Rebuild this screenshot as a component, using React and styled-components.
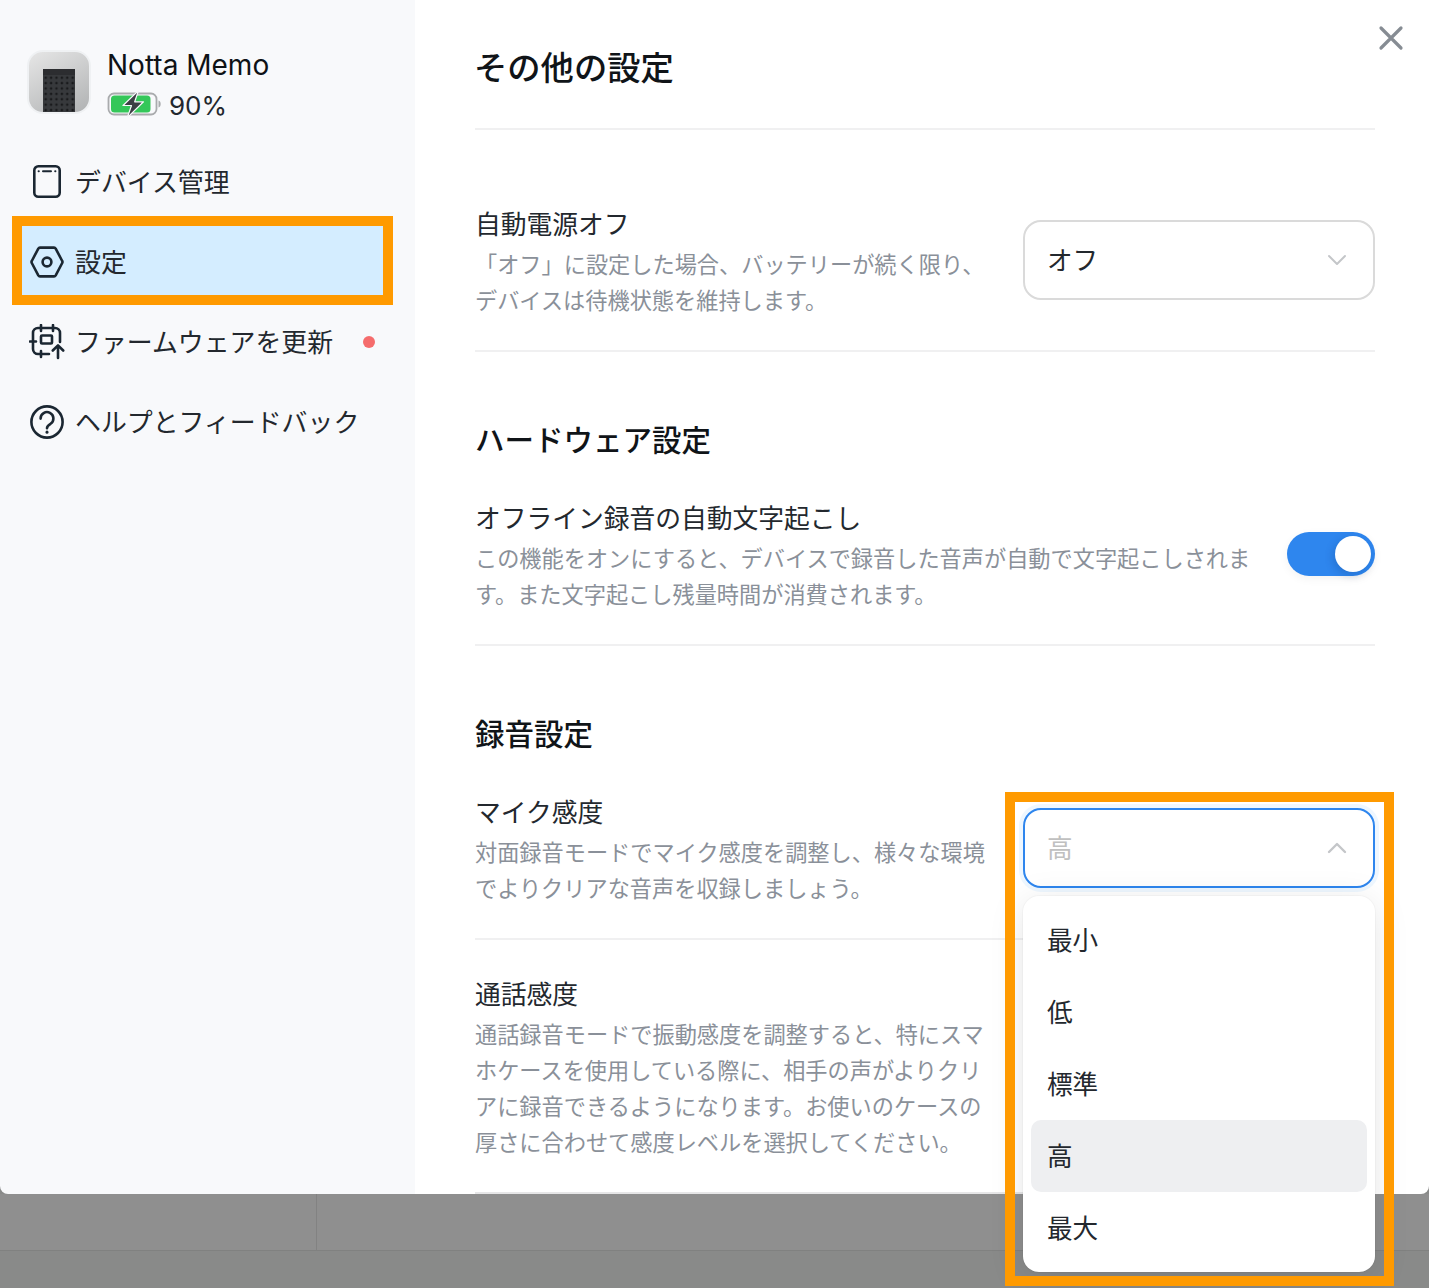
import React from "react";
import styled, { createGlobalStyle } from "styled-components";

const GlobalStyle = createGlobalStyle`
  html, body {
    margin: 0;
    padding: 0;
    background: #898a89;
  }
  * {
    box-sizing: border-box;
  }
`;

const Page = styled.div`
  position: relative;
  width: 1429px;
  height: 1288px;
  overflow: hidden;
  background: #898a89;
  font-family: Inter, "Noto Sans CJK JP", "Noto Sans", sans-serif;
  color: #23282e;
`;

const Modal = styled.div`
  position: relative;
  display: flex;
  height: 1194px;
`;

const Sidebar = styled.aside`
  flex: none;
  width: 415px;
  padding: 50px 0 0 16px;
  background: #f8f9fb;
  border-bottom-left-radius: 8px;
`;

const Brand = styled.div`
  display: flex;
  gap: 17px;
  height: 64px;
  padding-left: 11px;
  margin-bottom: 32px;
`;

const DeviceThumb = styled.div`
  flex: none;
  display: flex;
  flex-direction: column;
  align-items: center;
  justify-content: flex-end;
  width: 64px;
  height: 64px;
  overflow: hidden;
  border: 2px solid #eff1f3;
  border-radius: 16px;
  background: linear-gradient(150deg, #e6e6e6, #b0b2b3);
`;

const DeviceTop = styled.div`
  flex: none;
  width: 32px;
  height: 6px;
  background: #2c2d30;
`;

const DeviceBody = styled.div`
  flex: none;
  width: 32px;
  height: 37px;
  background-color: #37393c;
  background-image: radial-gradient(#191a1c 1.2px, transparent 1.5px);
  background-size: 5.4px 5.4px;
  background-position: 0 0;
`;

const BrandText = styled.div`
  display: flex;
  flex-direction: column;
  margin-left: -1px;
`;

const BrandName = styled.div`
  height: 30px;
  font-size: 28px;
  line-height: 30px;
  font-weight: 400;
  color: #0e1216;
`;

const BatteryRow = styled.div`
  display: flex;
  align-items: center;
  gap: 7px;
  margin-top: 10px;
  height: 28px;
  font-size: 26px;
`;

const BatteryLevel = styled.span`
  padding-top: 2px;
`;

const Nav = styled.nav`
  display: flex;
  flex-direction: column;
  gap: 8px;
`;

const NavItem = styled.div`
  display: flex;
  align-items: center;
  gap: 10px;
  width: 367px;
  height: 72px;
  padding: 0 8px 0 13px;
  font-size: 25.9px;
  line-height: 36px;
  background: ${(p) => (p.$active ? "#d4edff" : "transparent")};
  svg {
    flex: none;
  }
`;

const NavLabel = styled.span`
  padding-top: 2px;
`;

const Dot = styled.span`
  width: 12px;
  height: 12px;
  margin-left: auto;
  border-radius: 50%;
  background: #f56c6c;
`;

const Content = styled.main`
  position: relative;
  flex: 1;
  padding: 0 54px 0 60px;
  background: #fff;
  border-bottom-right-radius: 8px;
`;

const CloseButton = styled.button`
  position: absolute;
  top: 24px;
  right: 24px;
  display: flex;
  width: 28px;
  height: 28px;
  padding: 0;
  border: 0;
  background: none;
`;

const Header = styled.header`
  padding: 42px 0 34px;
  border-bottom: 2px solid #f0f0f1;
`;

const Title = styled.h1`
  margin: 0;
  margin-left: -1px;
  font-size: 33.3px;
  line-height: 52px;
  font-weight: 500;
  color: #101418;
`;

const SectionTitle = styled.h2`
  margin: 65px 0 37px;
  font-size: 29.5px;
  line-height: 46px;
  font-weight: 500;
  color: #101418;
`;

const Row = styled.section`
  display: flex;
  align-items: flex-start;
  justify-content: space-between;
  gap: 24px;
  padding: ${(p) => p.$top || 0}px 0 31px;
  border-bottom: 2px solid ${(p) => (p.$last ? "#e6e6e7" : "#f0f0f1")};
`;

const RowText = styled.div`
  flex: 1;
  min-width: 0;
  padding-top: 1px;
`;

const RowLabel = styled.div`
  margin-bottom: 4px;
  font-size: 25.75px;
  line-height: 36px;
`;

const RowDesc = styled.div`
  font-size: 22.2px;
  line-height: 36px;
  color: #8a9099;
`;

const SelectWrap = styled.div`
  position: relative;
  flex: none;
  width: 352px;
  margin-top: 14px;
`;

const SelectBox = styled.div`
  display: flex;
  align-items: center;
  justify-content: space-between;
  height: 80px;
  padding: 0 26px 0 22px;
  border: 2px solid ${(p) => (p.$open ? "#2e86ee" : "#dadada")};
  border-radius: 18px;
  background: #fff;
  font-size: 25.6px;
  line-height: 34px;
  color: ${(p) => (p.$open ? "#c0c0c0" : "#23282e")};
  box-shadow: ${(p) => (p.$open ? "0 0 0 4px #eef7ff" : "none")};
`;

const SelectValue = styled.span`
  padding-top: 2px;
`;

const Menu = styled.ul`
  position: absolute;
  top: 88px;
  left: 0;
  z-index: 3;
  width: 352px;
  margin: 0;
  padding: 8px;
  list-style: none;
  background: #fff;
  border-radius: 16px;
  box-shadow: 0 0 0 1px rgba(0, 0, 0, 0.025), 0 6px 36px rgba(0, 0, 0, 0.1);
`;

const MenuItem = styled.li`
  display: flex;
  align-items: center;
  height: 72px;
  padding: 2px 0 0 16px;
  border-radius: 10px;
  font-size: 25.6px;
  line-height: 34px;
  background: ${(p) => (p.$selected ? "#eeeff1" : "transparent")};
`;

const SelectSlot = styled.div`
  flex: none;
  width: 352px;
`;

const Toggle = styled.div`
  position: relative;
  flex: none;
  width: 88px;
  height: 44px;
  margin-top: 32px;
  border-radius: 22px;
  background: #2e86ee;
  box-shadow: 0 3px 10px rgba(0, 0, 0, 0.05);
`;

const Knob = styled.span`
  position: absolute;
  top: 4px;
  right: 4px;
  width: 36px;
  height: 36px;
  border-radius: 50%;
  background: #fff;
  box-shadow: -2px 3px 8px rgba(10, 50, 110, 0.22);
`;

const BackdropStrip = styled.div`
  display: flex;
  height: 57px;
  background: #8f8f8f;
  border-bottom: 1px solid #808180;
`;

const BackdropCell = styled.div`
  width: 317px;
  border-right: 1px solid #828282;
`;

const Annotation = styled.div`
  position: absolute;
  z-index: 5;
  border: 10px solid #ff9a00;
  pointer-events: none;
`;

const NavAnnotation = styled(Annotation)`
  left: 12px;
  top: 216px;
  width: 381px;
  height: 89px;
`;

const SelectAnnotation = styled(Annotation)`
  left: 1005px;
  top: 792px;
  width: 389px;
  height: 494px;
`;

const stroke = {
  fill: "none",
  stroke: "#1b2732",
  strokeWidth: 2.6,
  strokeLinecap: "round",
  strokeLinejoin: "round",
};

const DeviceIcon = () => (
  <svg width="36" height="36" viewBox="0 0 36 36" {...stroke}>
    <rect x="5.3" y="2.3" width="25.4" height="30.4" rx="4" />
    <path d="M14 7.2h8M9.6 7.2h.2M26.2 7.2h.2" strokeWidth="2" />
  </svg>
);

const GearIcon = () => (
  <svg width="36" height="36" viewBox="0 0 36 36" {...stroke}>
    <path d="M11 3.6h14a2 2 0 0 1 1.7 1L33.2 17a2 2 0 0 1 0 2l-6.5 12.4a2 2 0 0 1-1.7 1H11a2 2 0 0 1-1.7-1L2.8 19a2 2 0 0 1 0-2L9.3 4.6a2 2 0 0 1 1.7-1z" />
    <circle cx="18" cy="18" r="4.4" />
  </svg>
);

const FirmwareIcon = () => (
  <svg width="36" height="36" viewBox="0 0 36 36" {...stroke}>
    <path d="M20 30H9a5 5 0 0 1-5-5V9a5 5 0 0 1 5-5h17a5 5 0 0 1 5 5v9" />
    <rect x="12" y="11.5" width="11" height="8" rx="1" />
    <path d="M12 1v6M24 1v6M1 17.5h6M12 27v6M29 34V21.5M23.8 26.5l5.2-5.2 5.2 5.2" />
  </svg>
);

const HelpIcon = () => (
  <svg width="36" height="36" viewBox="0 0 36 36" {...stroke}>
    <circle cx="18" cy="18" r="15.6" />
    <path d="M11.6 14.6a6.4 6.4 0 1 1 10 5.2c-2.3 1.5-3.6 2.2-3.6 4.4" />
    <path d="M18 28v.2" strokeWidth="3" />
  </svg>
);

const ChevronIcon = ({ up, color, width = 2 }) => (
  <svg width="20" height="12" viewBox="0 0 20 12" fill="none" stroke={color} strokeWidth={width} strokeLinecap="round" strokeLinejoin="round">
    <path d={up ? "M2 10l8-8 8 8" : "M2 2l8 8 8-8"} />
  </svg>
);

const BatteryIcon = () => (
  <svg width="55" height="28" viewBox="0 0 54 28">
    <rect x="1" y="3.5" width="48" height="21" rx="5.5" fill="#f8f9fb" stroke="#a9abad" strokeWidth="1.8" />
    <rect x="3.5" y="5.6" width="39.5" height="17" rx="3.5" fill="#34c759" />
    <path d="M51 10.5c1.5.5 2.2 1.8 2.2 3.5s-.7 3-2.2 3.5z" fill="#a9abad" />
    <path d="M31 .6 15.5 15.5h8.5L19.8 27.6 36 11.8h-8.8z" fill="#3c3f44" stroke="#f8f9fb" strokeWidth="1.2" strokeLinejoin="round" />
  </svg>
);

const CloseIcon = () => (
  <svg width="28" height="28" viewBox="0 0 28 28" fill="none" stroke="#868c93" strokeWidth="3.2" strokeLinecap="round">
    <path d="M4 4l20 20M24 4L4 24" />
  </svg>
);

const sensitivityOptions = ["最小", "低", "標準", "高", "最大"];

export default function App() {
  return (
    <Page>
      <GlobalStyle />
      <Modal>
        <Sidebar>
          <Brand>
            <DeviceThumb>
              <DeviceTop />
              <DeviceBody />
            </DeviceThumb>
            <BrandText>
              <BrandName>Notta Memo</BrandName>
              <BatteryRow>
                <BatteryIcon />
                <BatteryLevel>90%</BatteryLevel>
              </BatteryRow>
            </BrandText>
          </Brand>
          <Nav>
            <NavItem>
              <DeviceIcon />
              <NavLabel>デバイス管理</NavLabel>
            </NavItem>
            <NavItem $active>
              <GearIcon />
              <NavLabel>設定</NavLabel>
            </NavItem>
            <NavItem>
              <FirmwareIcon />
              <NavLabel>ファームウェアを更新</NavLabel>
              <Dot />
            </NavItem>
            <NavItem>
              <HelpIcon />
              <NavLabel>ヘルプとフィードバック</NavLabel>
            </NavItem>
          </Nav>
        </Sidebar>

        <Content>
          <CloseButton aria-label="閉じる">
            <CloseIcon />
          </CloseButton>
          <Header>
            <Title>その他の設定</Title>
          </Header>

          <Row $top={76}>
            <RowText>
              <RowLabel>自動電源オフ</RowLabel>
              <RowDesc>「オフ」に設定した場合、バッテリーが続く限り、デバイスは待機状態を維持します。</RowDesc>
            </RowText>
            <SelectWrap>
              <SelectBox>
                <SelectValue>オフ</SelectValue>
                <ChevronIcon color="#c4c6c9" />
              </SelectBox>
            </SelectWrap>
          </Row>

          <SectionTitle>ハードウェア設定</SectionTitle>
          <Row>
            <RowText>
              <RowLabel>オフライン録音の自動文字起こし</RowLabel>
              <RowDesc>この機能をオンにすると、デバイスで録音した音声が自動で文字起こしされます。また文字起こし残量時間が消費されます。</RowDesc>
            </RowText>
            <Toggle>
              <Knob />
            </Toggle>
          </Row>

          <SectionTitle>録音設定</SectionTitle>
          <Row>
            <RowText>
              <RowLabel>マイク感度</RowLabel>
              <RowDesc>対面録音モードでマイク感度を調整し、様々な環境でよりクリアな音声を収録しましょう。</RowDesc>
            </RowText>
            <SelectWrap>
              <SelectBox $open>
                <SelectValue>高</SelectValue>
                <ChevronIcon up color="#c4c6c9" width={2.4} />
              </SelectBox>
              <Menu>
                {sensitivityOptions.map((option) => (
                  <MenuItem key={option} $selected={option === "高"}>
                    {option}
                  </MenuItem>
                ))}
              </Menu>
            </SelectWrap>
          </Row>

          <Row $top={36} $last>
            <RowText>
              <RowLabel>通話感度</RowLabel>
              <RowDesc>通話録音モードで振動感度を調整すると、特にスマホケースを使用している際に、相手の声がよりクリアに録音できるようになります。お使いのケースの厚さに合わせて感度レベルを選択してください。</RowDesc>
            </RowText>
            <SelectSlot />
          </Row>
        </Content>
      </Modal>

      <BackdropStrip>
        <BackdropCell />
      </BackdropStrip>

      <NavAnnotation />
      <SelectAnnotation />
    </Page>
  );
}
